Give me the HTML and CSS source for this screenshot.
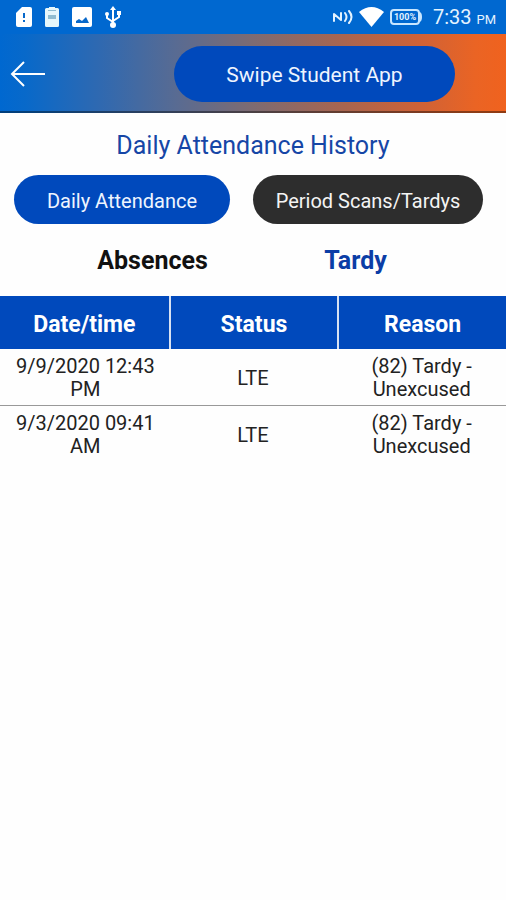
FILE: index.html
```html
<!DOCTYPE html>
<html lang="en">
<head>
<meta charset="utf-8">
<meta name="viewport" content="width=device-width, initial-scale=1">
<title>Daily Attendance History</title>
<link rel="stylesheet" href="styles.css">
</head>
<body>
<div class="status-bar">
  <div class="status-left">
    <svg width="16" height="20" viewBox="0 0 16 20" aria-hidden="true"><path fill="#fff" d="M6 0h8q2 0 2 2v16q0 2-2 2H2q-2 0-2-2V6z"/><path fill="#0868ca" d="M7 6h2v5H7zM7 13h2v2H7z"/></svg>
    <svg width="14" height="20" viewBox="0 0 14 20" aria-hidden="true"><path fill="#e6f7fb" d="M4 0h6v1h2.500q1.500 0 1.500 1.500v16q0 1.500-1.500 1.500h-11Q0 20 0 18.500v-16Q0 1 1.500 1H4z"/><path fill="#91bdd0" d="M3 3h8v1H3zM3 8h8v4H3z"/></svg>
    <svg width="20" height="20" viewBox="0 0 20 20" aria-hidden="true"><rect width="20" height="20" rx="2" fill="#fff"/><path fill="#0868ca" d="M4 16v-2l3-2 3 2 4-4 3 6z"/></svg>
    <svg width="16" height="22" viewBox="0 0 16 22" aria-hidden="true"><g fill="none" stroke="#fff" stroke-width="2"><path d="M8 3v16M8 16l-6-4V8M8 15l6-4V7"/></g><path fill="#fff" d="M8 0l3 4H5zM12 5h4v4h-4z"/><circle cx="2" cy="8" r="2" fill="#fff"/><circle cx="8" cy="19" r="3" fill="#fff"/></svg>
  </div>
  <div class="status-right">
    <svg width="20" height="16" viewBox="0 0 20 16" aria-hidden="true"><g fill="none" stroke="#e4f3ff" stroke-width="2" stroke-linecap="round" stroke-linejoin="round"><path d="M1 12V5l7 6V4M12 4q3 4 0 8M16 2q5 6 0 12"/></g></svg>
    <svg width="25" height="20" viewBox="0 0 25 20" aria-hidden="true"><path fill="#fff" d="M0 5Q12.500-5 25 5L12.500 20z"/></svg>
    <svg width="32" height="16" viewBox="0 0 32 16" role="img" aria-label="Battery 100%"><rect x="1" y="1" width="28" height="14" rx="3" fill="none" stroke="#c8e6ff" stroke-width="2"/><path d="M29 4q2 0 2 4t-2 4" fill="none" stroke="#c8e6ff" stroke-width="2"/><text class="battery-text" x="15" y="11" text-anchor="middle">100%</text></svg>
    <span class="clock">7:33 <span class="period">PM</span></span>
  </div>
</div>
<header class="app-header">
  <button class="back" type="button" aria-label="Back"><svg width="36" height="26" viewBox="0 0 36 26" aria-hidden="true"><path d="M35 13H2M14 1L2 13l12 12" fill="none" stroke="#fff" stroke-width="2"/></svg></button>
  <button class="pill app-name" type="button">Swipe Student App</button>
</header>
<main>
  <h1>Daily Attendance History</h1>
  <div class="modes">
    <button class="pill daily" type="button">Daily Attendance</button>
    <button class="pill scans" type="button">Period Scans/Tardys</button>
  </div>
  <div class="tabs">
    <button class="tab" type="button">Absences</button>
    <button class="tab active" type="button">Tardy</button>
  </div>
  <table>
    <thead><tr><th scope="col">Date/time</th><th scope="col">Status</th><th scope="col">Reason</th></tr></thead>
    <tbody>
      <tr><td>9/9/2020 12:43 PM</td><td>LTE</td><td>(82) Tardy - Unexcused</td></tr>
      <tr><td>9/3/2020 09:41 AM</td><td>LTE</td><td>(82) Tardy - Unexcused</td></tr>
    </tbody>
  </table>
</main>
</body>
</html>
```
FILE: styles.css
```css
* { box-sizing: border-box; }
body { margin: 0; min-height: 100vh; background: #fefefe; color: #222; font-family: Roboto, "Liberation Sans", sans-serif; font-size: 20px; }
button { margin: 0; padding: 0; border: 0; background: none; font: inherit; color: inherit; }
svg { display: block; }
.status-bar { display: flex; justify-content: space-between; align-items: center; height: 34px; padding: 0 10px 0 16px; background: #0068d0; color: #e4f3ff; }
.status-left { display: flex; align-items: center; gap: 13px; }
.status-right { display: flex; align-items: center; gap: 6px; }
.battery-text { fill: #e4f3ff; font-size: 9px; font-weight: 700; }
.clock { margin-left: 5px; padding-top: 2px; font-size: 20px; line-height: 24px; white-space: nowrap; }
.period { font-size: 13px; }
.app-header { display: grid; grid-template-columns: 1fr 281px 51px; align-items: center; height: 79px; padding-top: 2px; border-bottom: 2px solid #00000066; background: linear-gradient(90deg, #0068d0 0%, #0869ca 5%, #3069b0 20%, #596b92 35%, #7d6b72 50%, #a8654f 68%, #cf6236 83%, #ea6424 94%, #f0621e 100%) border-box; }
.back { justify-self: start; padding-left: 10px; }
.pill { padding-top: 2px; border-radius: 28px; background: #0049bc; color: #eef5ff; }
.app-name { height: 56px; font-size: 21px; }
h1 { margin: 0; padding-top: 18px; text-align: center; font-size: 25px; line-height: 30px; font-weight: 400; color: #1646a6; }
.modes { display: grid; grid-template-columns: 216fr 230fr; gap: 23px; padding: 14px 23px 0 14px; }
.modes .pill { height: 49px; }
.scans { background: #2d2d2d; color: #f4f4f4; }
.modes .scans { background: #2d2d2d; }
.tabs { display: grid; grid-template-columns: 1fr 1fr; padding: 22px 49px 0 51px; }
.tab { font-size: 25px; line-height: 30px; font-weight: 700; color: #111; }
.tab.active { color: #0b3da6; }
table { width: 100%; margin-top: 20px; table-layout: fixed; border-collapse: separate; border-spacing: 0; text-align: center; }
th { height: 53px; padding: 3px 0 0; background: #0049bc; color: #fff; font-size: 23px; line-height: 27px; font-weight: 700; }
th + th { border-left: 2px solid #d8e2f2; }
td { height: 56px; padding: 6px 12px 4px 14px; line-height: 23px; }
td + td { padding: 6px 14px 4px; }
tbody tr + tr td { border-top: 1px solid #999; }
```
